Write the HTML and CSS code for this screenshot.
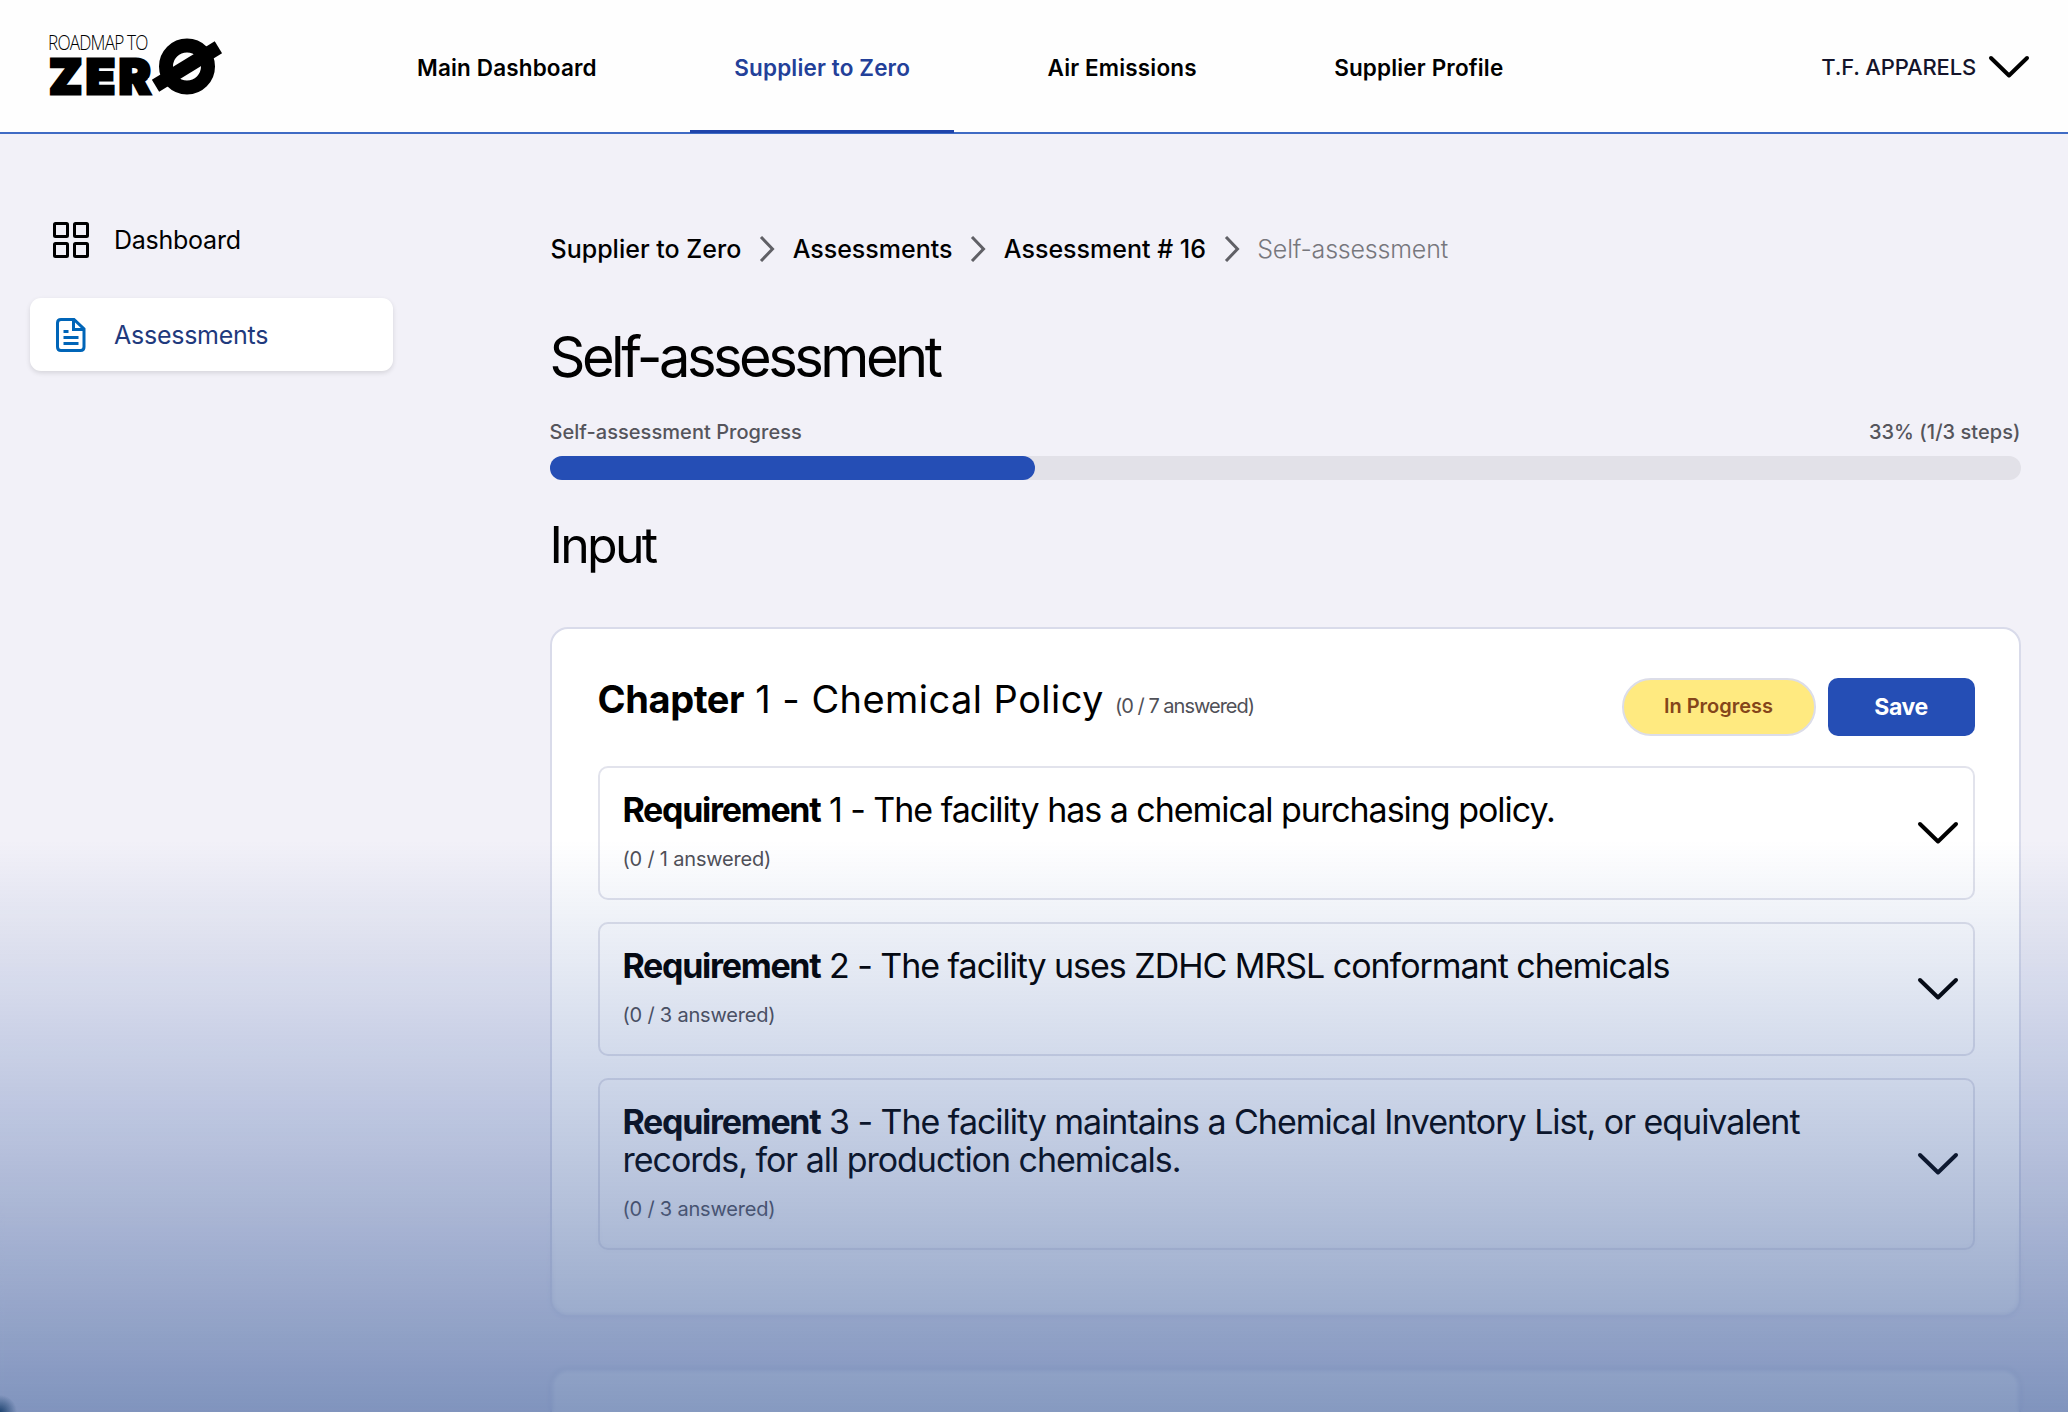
FILE: index.html
```html
<!DOCTYPE html>
<html lang="en">
<head>
    <meta charset="UTF-8">
    <meta name="viewport" content="width=device-width, initial-scale=1.0">
    <title>Self-assessment | Roadmap to Zero</title>
    <link rel="stylesheet" href="styles.css">
</head>
<body>
    <header class="header">
        <a href="#" class="logo">
            <span class="logo-words">
                <span class="logo-top">ROADMAP TO</span>
                <span class="logo-bottom">ZER</span>
            </span>
            <svg class="logo-zero" width="72" height="60" viewBox="0 0 72 60">
                <path d="M2.9 52.3 L68.4 12.3" stroke="#fff" stroke-width="20"/>
                <circle cx="37" cy="31.5" r="21" fill="none" stroke="#000" stroke-width="14"/>
                <path d="M5.5 50.7 L68.4 12.3" stroke="#000" stroke-width="14"/>
            </svg>
        </a>
        <nav class="nav">
            <a href="#" class="nav-link">Main Dashboard</a>
            <a href="#" class="nav-link active">Supplier to Zero</a>
            <a href="#" class="nav-link">Air Emissions</a>
            <a href="#" class="nav-link">Supplier Profile</a>
        </nav>
        <div class="account">
            <span>T.F. APPARELS</span>
            <svg class="chevron" width="42" height="24" viewBox="0 0 42 24"><path d="M3 3 L21 20.5 L39 3"/></svg>
        </div>
    </header>

    <div class="layout">
        <aside class="sidebar">
            <a href="#" class="side-link">
                <svg width="36" height="36" viewBox="0 0 36 36" fill="none" stroke="#000" stroke-width="3">
                    <rect x="1.5" y="1.5" width="13" height="13" rx="1"/>
                    <rect x="21.5" y="1.5" width="13" height="13" rx="1"/>
                    <rect x="1.5" y="21.5" width="13" height="13" rx="1"/>
                    <rect x="21.5" y="21.5" width="13" height="13" rx="1"/>
                </svg>
                Dashboard
            </a>
            <a href="#" class="side-link active">
                <svg width="36" height="36" viewBox="0 0 36 36" fill="none" stroke="#0065b8" stroke-width="3">
                    <path d="M8 2.5 H21 L31 12 V30 Q31 33.5 27.5 33.5 H8 Q4.5 33.5 4.5 30 V6 Q4.5 2.5 8 2.5 Z"/>
                    <path d="M20.5 3 V12.5 H31 M10.5 14.5 H15.5 M10.5 20.5 H25.5 M10.5 26.5 H25.5"/>
                </svg>
                Assessments
            </a>
        </aside>

        <main class="main">
            <div class="breadcrumb">
                <a href="#">Supplier to Zero</a>
                <svg width="16" height="26" viewBox="0 0 16 26"><path d="M2 1 L13.5 13 L2 25"/></svg>
                <a href="#">Assessments</a>
                <svg width="16" height="26" viewBox="0 0 16 26"><path d="M2 1 L13.5 13 L2 25"/></svg>
                <a href="#">Assessment # 16</a>
                <svg width="16" height="26" viewBox="0 0 16 26"><path d="M2 1 L13.5 13 L2 25"/></svg>
                <span class="current">Self-assessment</span>
            </div>

            <h1>Self-assessment</h1>

            <div class="progress-label">
                <span>Self-assessment Progress</span>
                <span>33% (1/3 steps)</span>
            </div>
            <div class="progress"><div class="progress-fill" style="width: 33%"></div></div>

            <h2>Input</h2>

            <section class="chapter">
                <div class="chapter-head">
                    <h3><b>Chapter</b> 1 - Chemical Policy <small>(0 / 7 answered)</small></h3>
                    <div class="chapter-actions">
                        <span class="badge">In Progress</span>
                        <button class="save">Save</button>
                    </div>
                </div>

                <div class="requirement">
                    <div class="requirement-text">
                        <p><b>Requirement</b> 1 - The facility has a chemical purchasing policy.</p>
                        <small>(0 / 1 answered)</small>
                    </div>
                    <svg class="chevron" width="42" height="24" viewBox="0 0 42 24"><path d="M3 3 L21 20.5 L39 3"/></svg>
                </div>
                <div class="requirement">
                    <div class="requirement-text">
                        <p><b>Requirement</b> 2 - The facility uses ZDHC MRSL conformant chemicals</p>
                        <small>(0 / 3 answered)</small>
                    </div>
                    <svg class="chevron" width="42" height="24" viewBox="0 0 42 24"><path d="M3 3 L21 20.5 L39 3"/></svg>
                </div>
                <div class="requirement">
                    <div class="requirement-text">
                        <p><b>Requirement</b> 3 - The facility maintains a Chemical Inventory List, or equivalent records, for all production chemicals.</p>
                        <small>(0 / 3 answered)</small>
                    </div>
                    <svg class="chevron" width="42" height="24" viewBox="0 0 42 24"><path d="M3 3 L21 20.5 L39 3"/></svg>
                </div>
            </section>

            <section class="chapter next"></section>
        </main>
    </div>

    <div class="soften"></div>
    <div class="fade"></div>
</body>
</html>
```
FILE: styles.css
```css
* {
    box-sizing: border-box;
}
body {
    margin: 0;
    height: 1412px;
    overflow: hidden;
    background-color: #f2f1f8;
    font-family: Inter, sans-serif;
    color: #000;
}
a {
    color: inherit;
    text-decoration: none;
}
h1, h2, h3, p {
    margin: 0;
    font-weight: 400;
}
.header {
    display: flex;
    align-items: center;
    height: 134px;
    padding: 0 38px 0 48px;
    background-color: #fefefe;
    border-bottom: 2px solid #3f6bc4;
}
.logo {
    display: flex;
    width: 174px;
    height: 62px;
}
.logo-words {
    display: flex;
    flex-direction: column;
    width: 102px;
    white-space: nowrap;
}
.logo-top {
    width: 125px;
    font-family: "Open Sans", sans-serif;
    font-size: 21px;
    line-height: 15px;
    font-weight: 350;
    letter-spacing: -1px;
    transform: scaleX(0.82);
    transform-origin: left;
}
.logo-bottom {
    padding-left: 1px;
    font-size: 48px;
    line-height: 53px;
    font-weight: 900;
    letter-spacing: 3.5px;
    -webkit-text-stroke: 3px #000;
}
.logo-zero {
    flex: none;
    overflow: visible;
    position: relative;
}
.nav {
    display: flex;
    gap: 49.5px;
    margin-left: 151px;
    height: 134px;
}
.nav-link {
    padding: 0 44px;
    font-size: 22.5px;
    font-weight: 600;
    letter-spacing: 0.15px;
    line-height: 138px;
    white-space: nowrap;
}
.nav-link.active {
    color: #234099;
    border-bottom: 3px solid #1f44ab;
}
.account {
    display: flex;
    align-items: center;
    gap: 12px;
    margin-left: auto;
    padding-top: 2px;
    font-size: 22px;
    font-weight: 500;
    letter-spacing: -0.15px;
    color: #14142b;
}
.chevron {
    flex: none;
    fill: none;
    stroke: #000;
    stroke-width: 4;
    stroke-linecap: round;
    stroke-linejoin: round;
}
.layout {
    display: flex;
}
.sidebar {
    width: 549.5px;
    padding: 69px 156.5px 0 30px;
}
.side-link {
    display: flex;
    align-items: center;
    gap: 25px;
    height: 73px;
    margin-bottom: 22px;
    padding: 0 23px;
    border-radius: 11px;
    font-size: 25px;
    letter-spacing: -0.25px;
}
.side-link.active {
    background-color: #fff;
    color: #1f3a7d;
    box-shadow: 0 2px 5px rgba(0,0,0,0.12);
}
.main {
    width: 1471px;
    padding-top: 96px;
}
.breadcrumb {
    display: flex;
    align-items: center;
    gap: 17.7px;
    height: 38px;
    padding-left: 1px;
    font-size: 25px;
    font-weight: 500;
}
.breadcrumb svg {
    fill: none;
    stroke: #606066;
    stroke-width: 3;
}
.breadcrumb .current {
    font-weight: 300;
    letter-spacing: -0.2px;
    color: #77777d;
}
h1 {
    margin-top: 55px;
    font-size: 56px;
    font-weight: 420;
    line-height: 68px;
    letter-spacing: -3.5px;
}
.progress-label {
    display: flex;
    justify-content: space-between;
    margin-top: 29px;
    font-size: 20px;
    line-height: 24px;
    font-weight: 500;
    letter-spacing: 0.05px;
    color: #55555c;
}
.progress {
    height: 24px;
    margin-top: 12px;
    border-radius: 12px;
    background-color: #e2e1e8;
}
.progress-fill {
    height: 100%;
    border-radius: 12px;
    background-color: #254eb5;
}
h2 {
    margin-top: 35px;
    font-size: 50px;
    font-weight: 420;
    line-height: 60px;
    letter-spacing: -2.7px;
}
.chapter {
    height: 690px;
    margin-top: 52px;
    padding: 49px 44px 0 46px;
    background-color: #fff;
    border: 2px solid #d9dbea;
    border-radius: 18px;
}
.chapter.next {
    height: 44px;
    margin-top: 51px;
    padding: 0;
    border-bottom: none;
    border-radius: 18px 18px 0 0;
}
.chapter-head {
    display: flex;
    justify-content: space-between;
    height: 88px;
}
h3 {
    font-size: 38px;
    line-height: 42px;
    letter-spacing: 0.45px;
}
h3 b {
    letter-spacing: -0.4px;
}
small {
    font-size: 20px;
    letter-spacing: -0.2px;
    color: #505057;
}
h3 small {
    letter-spacing: -1px;
}
.chapter-actions {
    display: flex;
    gap: 12px;
}
.badge {
    width: 194px;
    height: 58px;
    border: 2px solid #dcdde8;
    border-radius: 29px;
    background-color: #ffea80;
    color: #84451a;
    font-size: 20px;
    line-height: 53px;
    font-weight: 600;
    text-align: center;
}
.save {
    width: 147px;
    height: 58px;
    border: none;
    border-radius: 10px;
    background-color: #254eb5;
    color: #fff;
    font-family: inherit;
    font-size: 23px;
    font-weight: 700;
    letter-spacing: -0.4px;
}
.requirement {
    display: flex;
    justify-content: space-between;
    align-items: center;
    margin-bottom: 22px;
    padding: 23px 14px 25px 23px;
    border: 2px solid #e2e3ec;
    border-radius: 10px;
}
.requirement-text {
    max-width: 1240px;
}
.requirement p {
    font-size: 34px;
    line-height: 38px;
    letter-spacing: -1.03px;
}
.requirement b {
    letter-spacing: -1.3px;
}
.requirement small {
    display: block;
    margin-top: 16px;
    line-height: 28px;
}
.requirement .chevron {
    margin-top: 2px;
}
/* page fades into the blue backdrop towards the bottom */
.soften, .fade {
    position: absolute;
    inset: 0;
    pointer-events: none;
}
.soften {
    backdrop-filter: blur(2px);
    mask-image: linear-gradient(transparent 1200px, #000 1330px);
}
.fade {
    background:
        radial-gradient(circle at 0 1412px, #1f4470 0, rgba(31,68,112,0) 17px),
        linear-gradient(rgba(44,84,185,0) 840px, rgba(42,80,160,0.23) 1077px, rgba(42,77,150,0.35) 1200px, rgba(42,77,145,0.57) 1412px);
}
```
